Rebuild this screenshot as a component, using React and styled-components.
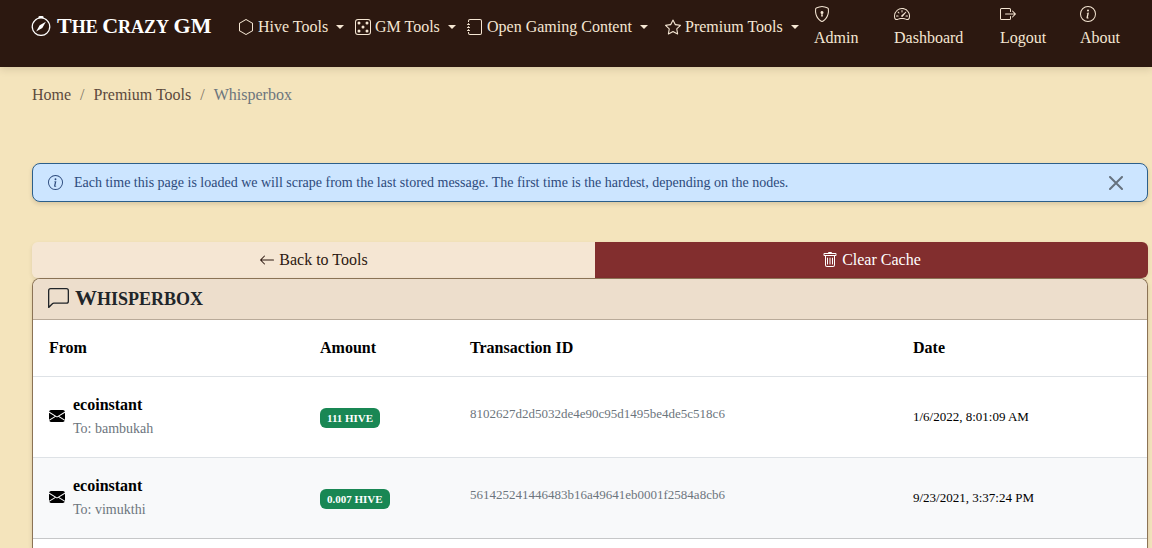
import { useState } from "react";
import styled, { createGlobalStyle } from "styled-components";
import {
  BsArrowLeft,
  BsBoxArrowRight,
  BsChatLeft,
  BsCompass,
  BsDice5,
  BsEnvelopeFill,
  BsHexagon,
  BsInfoCircle,
  BsJournal,
  BsShieldLock,
  BsSpeedometer2,
  BsStar,
  BsTrash,
} from "react-icons/bs";

const menus = [
  { label: "Hive Tools", icon: BsHexagon },
  { label: "GM Tools", icon: BsDice5 },
  { label: "Open Gaming Content", icon: BsJournal },
  { label: "Premium Tools", icon: BsStar },
];

const links = [
  { label: "Admin", icon: BsShieldLock },
  { label: "Dashboard", icon: BsSpeedometer2 },
  { label: "Logout", icon: BsBoxArrowRight },
  { label: "About", icon: BsInfoCircle },
];

const messages = [
  {
    from: "ecoinstant",
    to: "bambukah",
    amount: "111 HIVE",
    trx: "8102627d2d5032de4e90c95d1495be4de5c518c6",
    date: "1/6/2022, 8:01:09 AM",
  },
  {
    from: "ecoinstant",
    to: "vimukthi",
    amount: "0.007 HIVE",
    trx: "561425241446483b16a49641eb0001f2584a8cb6",
    date: "9/23/2021, 3:37:24 PM",
  },
];

export default function App() {
  const [alertOpen, setAlertOpen] = useState(true);

  return (
    <Page>
      <GlobalStyle />
      <Navbar>
        <Brand href="/">
          <BsCompass size={20} />
          <span>
            <Word>The</Word> <Word>Crazy</Word> <Word $caps>GM</Word>
          </span>
        </Brand>
        <NavItems>
          {menus.map(({ label, icon: Icon }) => (
            <MenuButton key={label} type="button" aria-haspopup="true">
              <Icon size={16} />
              {label}
              <Caret />
            </MenuButton>
          ))}
          {links.map(({ label, icon: Icon }) => (
            <NavLink key={label} href="/">
              <Icon size={16} />
              {label}
            </NavLink>
          ))}
        </NavItems>
      </Navbar>
      <Main>
        <Breadcrumb aria-label="breadcrumb">
          <Crumb href="/">Home</Crumb>
          <Divider>/</Divider>
          <Crumb href="/">Premium Tools</Crumb>
          <Divider>/</Divider>
          <CurrentCrumb>Whisperbox</CurrentCrumb>
        </Breadcrumb>
        {alertOpen && (
          <Alert role="alert">
            <BsInfoCircle size={15} />
            <AlertText>
              Each time this page is loaded we will scrape from the last stored
              message. The first time is the hardest, depending on the nodes.
            </AlertText>
            <CloseButton
              type="button"
              aria-label="Close"
              onClick={() => setAlertOpen(false)}
            >
              <svg width="14" height="14" viewBox="0 0 14 14">
                <path d="M1 1l12 12M13 1L1 13" stroke="currentColor" strokeWidth="2" strokeLinecap="round" />
              </svg>
            </CloseButton>
          </Alert>
        )}
        <ButtonGroup>
          <BackLink href="/">
            <BsArrowLeft size={16} />
            Back to Tools
          </BackLink>
          <ClearButton type="button">
            <BsTrash size={16} />
            Clear Cache
          </ClearButton>
        </ButtonGroup>
        <Card>
          <CardHeader>
            <BsChatLeft size={21} />
            <CardTitle>
              <Word>Whisperbox</Word>
            </CardTitle>
          </CardHeader>
          <Table>
            <thead>
              <tr>
                <HeadCell $width="271px">From</HeadCell>
                <HeadCell $width="150px">Amount</HeadCell>
                <HeadCell>Transaction ID</HeadCell>
                <HeadCell $width="250px">Date</HeadCell>
              </tr>
            </thead>
            <tbody>
              {messages.map((message) => (
                <Row key={message.trx}>
                  <Cell>
                    <Sender>
                      <BsEnvelopeFill size={16} />
                      <div>
                        <SenderName>{message.from}</SenderName>
                        <Recipient>To: {message.to}</Recipient>
                      </div>
                    </Sender>
                  </Cell>
                  <Cell>
                    <Badge>{message.amount}</Badge>
                  </Cell>
                  <Cell>
                    <Trx>{message.trx}</Trx>
                  </Cell>
                  <Cell>
                    <Time>{message.date}</Time>
                  </Cell>
                </Row>
              ))}
            </tbody>
          </Table>
        </Card>
      </Main>
    </Page>
  );
}

const GlobalStyle = createGlobalStyle`
  * {
    box-sizing: border-box;
  }
  body {
    margin: 0;
    background: #f4e4bc;
    color: #212529;
    font-family: "Liberation Serif", "Times New Roman", serif;
    font-size: 16px;
    line-height: 24px;
  }
  a {
    color: inherit;
    text-decoration: none;
  }
  button {
    font: inherit;
    color: inherit;
    border: 0;
    padding: 0;
    background: none;
    cursor: pointer;
  }
  svg {
    flex: none;
  }
`;

const Page = styled.div`
  display: flex;
  flex-direction: column;
  min-height: 100vh;
`;

const Navbar = styled.header`
  display: flex;
  align-items: flex-start;
  padding: 2px 4px 15px 31px;
  background: #2c1810;
  color: #f5e6d3;
  box-shadow: 0 2px 8px rgba(44, 24, 16, 0.15);
`;

const Brand = styled.a`
  display: flex;
  align-items: center;
  gap: 6px;
  width: 207px;
  height: 48px;
  color: #fff;
  font-size: 18px;
  font-weight: bold;
  white-space: nowrap;
`;

// Capitals throughout, with a larger initial
const Word = styled.span`
  display: inline-block;
  font-size: ${({ $caps }) => ($caps ? "22px" : "18px")};
  text-transform: uppercase;
  &::first-letter {
    font-size: 22px;
  }
`;

const NavItems = styled.nav`
  display: grid;
  grid-template-columns: 117px 112px 198px 149px 80px 106px 80px auto;
  align-items: center;
  white-space: nowrap;
`;

const MenuButton = styled.button`
  display: flex;
  align-items: center;
  gap: 4px;
  height: 50px;
`;

const Caret = styled.span`
  margin-left: 4px;
  border-top: 4px solid;
  border-left: 4px solid transparent;
  border-right: 4px solid transparent;
`;

const NavLink = styled.a`
  display: flex;
  flex-direction: column;
  align-items: flex-start;
  gap: 4px;
  padding-top: 2px;
`;

const Main = styled.main`
  display: flex;
  flex: 1;
  flex-direction: column;
  padding: 16px 4px 0 32px;
`;

const Breadcrumb = styled.nav`
  display: flex;
  gap: 9px;
  margin-bottom: 56px;
`;

const Crumb = styled.a`
  color: #5c4a3d;
`;

const Divider = styled.span`
  color: #7c7264;
`;

const CurrentCrumb = styled.span`
  color: #6c757d;
`;

const Alert = styled.div`
  display: flex;
  align-items: center;
  min-height: 39px;
  margin-bottom: 40px;
  padding: 0 24px 0 15px;
  border: 1px solid #2c5f8a;
  border-radius: 8px;
  background: #cce5ff;
  color: #2c4a7c;
  box-shadow: 0 2px 4px rgba(44, 24, 16, 0.15);
  font-size: 14px;
`;

const AlertText = styled.span`
  flex: 1;
  margin-left: 11px;
`;

const CloseButton = styled.button`
  display: flex;
  color: #66727f;
`;

const ButtonGroup = styled.div`
  display: flex;
  border-radius: 6px;
  overflow: hidden;
  box-shadow: 0 2px 4px rgba(44, 24, 16, 0.1);
`;

const BackLink = styled.a`
  display: flex;
  flex: 1 1 auto;
  align-items: center;
  justify-content: center;
  gap: 4px;
  height: 36px;
  background: #f5e6d3;
  color: #2c1810;
`;

const ClearButton = styled(BackLink).attrs({ as: "button" })`
  background: #822e2e;
  color: #fff;
`;

const Card = styled.section`
  flex: 1;
  border: 1px solid #8b7355;
  border-bottom: 0;
  border-radius: 8px 8px 0 0;
  overflow: hidden;
  background: #fff;
  box-shadow: 0 2px 4px rgba(44, 24, 16, 0.15);
`;

const CardHeader = styled.div`
  display: flex;
  align-items: center;
  gap: 6px;
  height: 41px;
  padding: 0 15px 2px;
  border-bottom: 1px solid #b9aa99;
  background: #eddecc;
`;

const CardTitle = styled.h1`
  margin: 0;
  font-size: 18px;
  font-weight: bold;
`;

const Table = styled.table`
  width: 100%;
  table-layout: fixed;
  border-collapse: collapse;
  color: #000;
`;

const HeadCell = styled.th`
  width: ${({ $width }) => $width || "auto"};
  height: 56px;
  padding: 0 16px;
  border-bottom: 1px solid #dee2e6;
  text-align: left;
`;

const Row = styled.tr`
  height: 81px;
  border-bottom: 1px solid #dee2e6;
  &:nth-child(even) {
    background: #f8f9fa;
  }
  &:last-child {
    border-bottom-color: #c6c7c8;
  }
`;

const Cell = styled.td`
  padding: 0 16px;
`;

const Sender = styled.div`
  display: flex;
  align-items: center;
  gap: 8px;
  svg {
    margin-bottom: 2px;
  }
`;

const SenderName = styled.div`
  font-weight: bold;
`;

const Recipient = styled.div`
  color: #6c757d;
  font-size: 14px;
`;

const Badge = styled.span`
  display: inline-block;
  padding: 0 7px;
  border-radius: 6px;
  background: #198754;
  color: #fff;
  font-size: 11px;
  font-weight: bold;
  line-height: 20px;
`;

const Trx = styled.div`
  padding-bottom: 6px;
  color: #6c757d;
  font-size: 13px;
`;

const Time = styled.time`
  font-size: 13px;
`;
